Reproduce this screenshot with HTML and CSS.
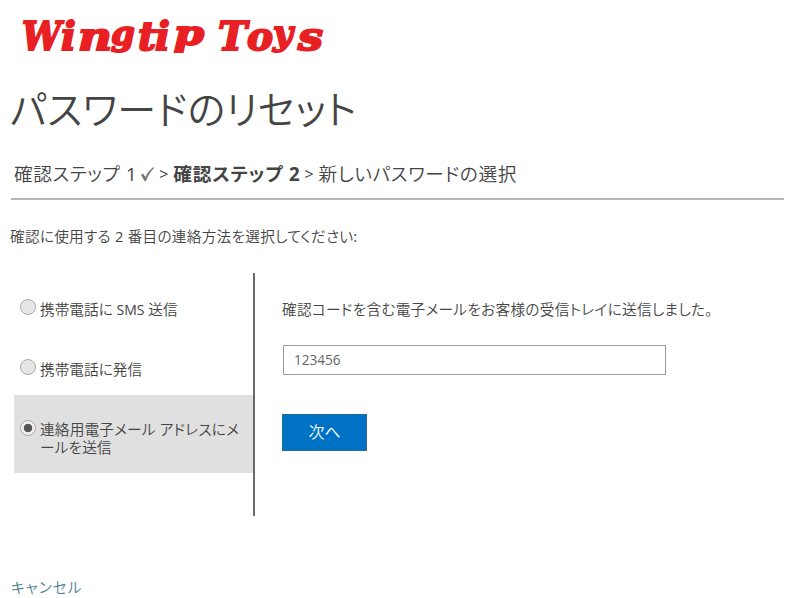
FILE: index.html
```
<!DOCTYPE html>
<html lang="ja">
<head>
<meta charset="utf-8">
<title>パスワードのリセット</title>
<link rel="stylesheet" href="styles.css">
</head>
<body>
<header>
<svg class="logo" width="340" height="62" viewBox="0 0 340 62" role="img" aria-label="Wingtip Toys">
<text y="50"><tspan x="22" textLength="39" lengthAdjust="spacingAndGlyphs">W</tspan><tspan x="61">i</tspan><tspan x="78" textLength="34" lengthAdjust="spacingAndGlyphs">n</tspan><tspan x="111" y="45" class="low">g</tspan><tspan x="138" y="50">t</tspan><tspan x="155">i</tspan><tspan x="174" y="45" class="low" textLength="30" lengthAdjust="spacingAndGlyphs">p</tspan> <tspan x="218" y="50">T</tspan><tspan x="247">o</tspan><tspan x="273" y="45" class="low">y</tspan><tspan x="298" y="50" textLength="25" lengthAdjust="spacingAndGlyphs">s</tspan></text>
</svg>
<h1>パスワードのリセット</h1>
</header>
<nav class="steps"><span class="s1">確認ステップ <b>1</b></span><svg class="check" width="15" height="16" viewBox="0 0 15 16"><path d="M1 9L3 7.5L5.5 11Q8 5 13.5 1L14 2Q9 7 6 15H4.5Z"/></svg><span class="gt">&gt;</span><strong>確認ステップ 2</strong><span class="gt">&gt;</span><span class="s3">新しいパスワードの選択</span></nav>
<p class="prompt">確認に使用する <b>2</b> 番目の連絡方法を選択してください<b>:</b></p>
<main>
<section class="options">
<label><i></i><span class="sms">携帯電話に <b>SMS</b> 送信</span></label>
<label><i></i><span>携帯電話に発信</span></label>
<label class="selected"><i></i><span class="mail">連絡用電子メール アドレスにメ<br>ールを送信</span></label>
</section>
<section class="verify">
<p>確認コードを含む電子メールをお客様の受信トレイに送信しました。</p>
<input type="text" value="123456">
<button>次へ</button>
</section>
</main>
<footer><a>キャンセル</a></footer>
</body>
</html>
```
FILE: styles.css
```
* { box-sizing: border-box; }
body { margin: 0; width: 800px; height: 598px; overflow: hidden; background: #fff; color: #444; font: 350 14.67px/18px "Open Sans", "Noto Sans CJK JP", sans-serif; font-feature-settings: "palt"; white-space: nowrap; }
p, h1 { margin: 0; }
b { font-weight: 400; }
.logo { display: block; fill: #e82024; stroke: #e82024; stroke-width: 2; font: italic bold 39px "DejaVu Serif", serif; }
.low { font-size: 34px; }
h1 { height: 93px; padding: 24px 0 0 10px; font-size: 39px; line-height: 46px; font-weight: 350; letter-spacing: .35px; }
.steps { display: flex; align-items: center; height: 45px; margin: 0 16px 0 11px; padding: 0 0 6px 3px; border-bottom: 2px solid #b5b8b7; font-size: 18.67px; line-height: 28px; }
.s1 { letter-spacing: .6px; }
.check { margin-left: 3px; fill: #777; }
.gt { margin: 0 5px 0 4px; font-size: 16px; font-weight: 400; }
.steps strong { font-weight: 700; letter-spacing: .8px; }
.s3 { letter-spacing: .65px; }
.prompt { margin: 27px 0 0 10px; letter-spacing: .25px; }
main { display: flex; height: 243px; margin: 28px 0 0 14px; }
.options { width: 241px; border-right: 2px solid #686a6b; padding-top: 2px; }
label { display: flex; height: 60px; padding: 25px 0 0 6px; }
label.selected { height: 78px; padding-top: 26px; background: #e0e0e0; }
.sms b { font-size: 14px; }
.mail { margin-top: -1px; letter-spacing: .18px; }
label i { flex: none; width: 16px; height: 16px; margin: -1px 4px 0 0; border: 1px solid #aaa; border-radius: 50%; background: #e6e6e6; }
.selected i { background: radial-gradient(circle, #555 0 3.8px, #eee 4.6px); }
.verify { display: flex; flex-direction: column; align-items: flex-start; padding: 27px 0 0 27px; }
.verify p { letter-spacing: .28px; }
input { width: 383px; height: 30px; margin: 27px 0 0 1px; padding: 0 10px 2px; border: 1px solid #999; color: #666; font: 400 13.6px "Open Sans", sans-serif; }
button { width: 85px; height: 37px; margin-top: 39px; padding: 0 0 2px; border: 1px solid #276b94; background: #0072c6; color: #fff; font: inherit; font-size: 16px; }
footer { padding: 62px 0 0 11px; color: #4d7f91; letter-spacing: 1px; }
```
